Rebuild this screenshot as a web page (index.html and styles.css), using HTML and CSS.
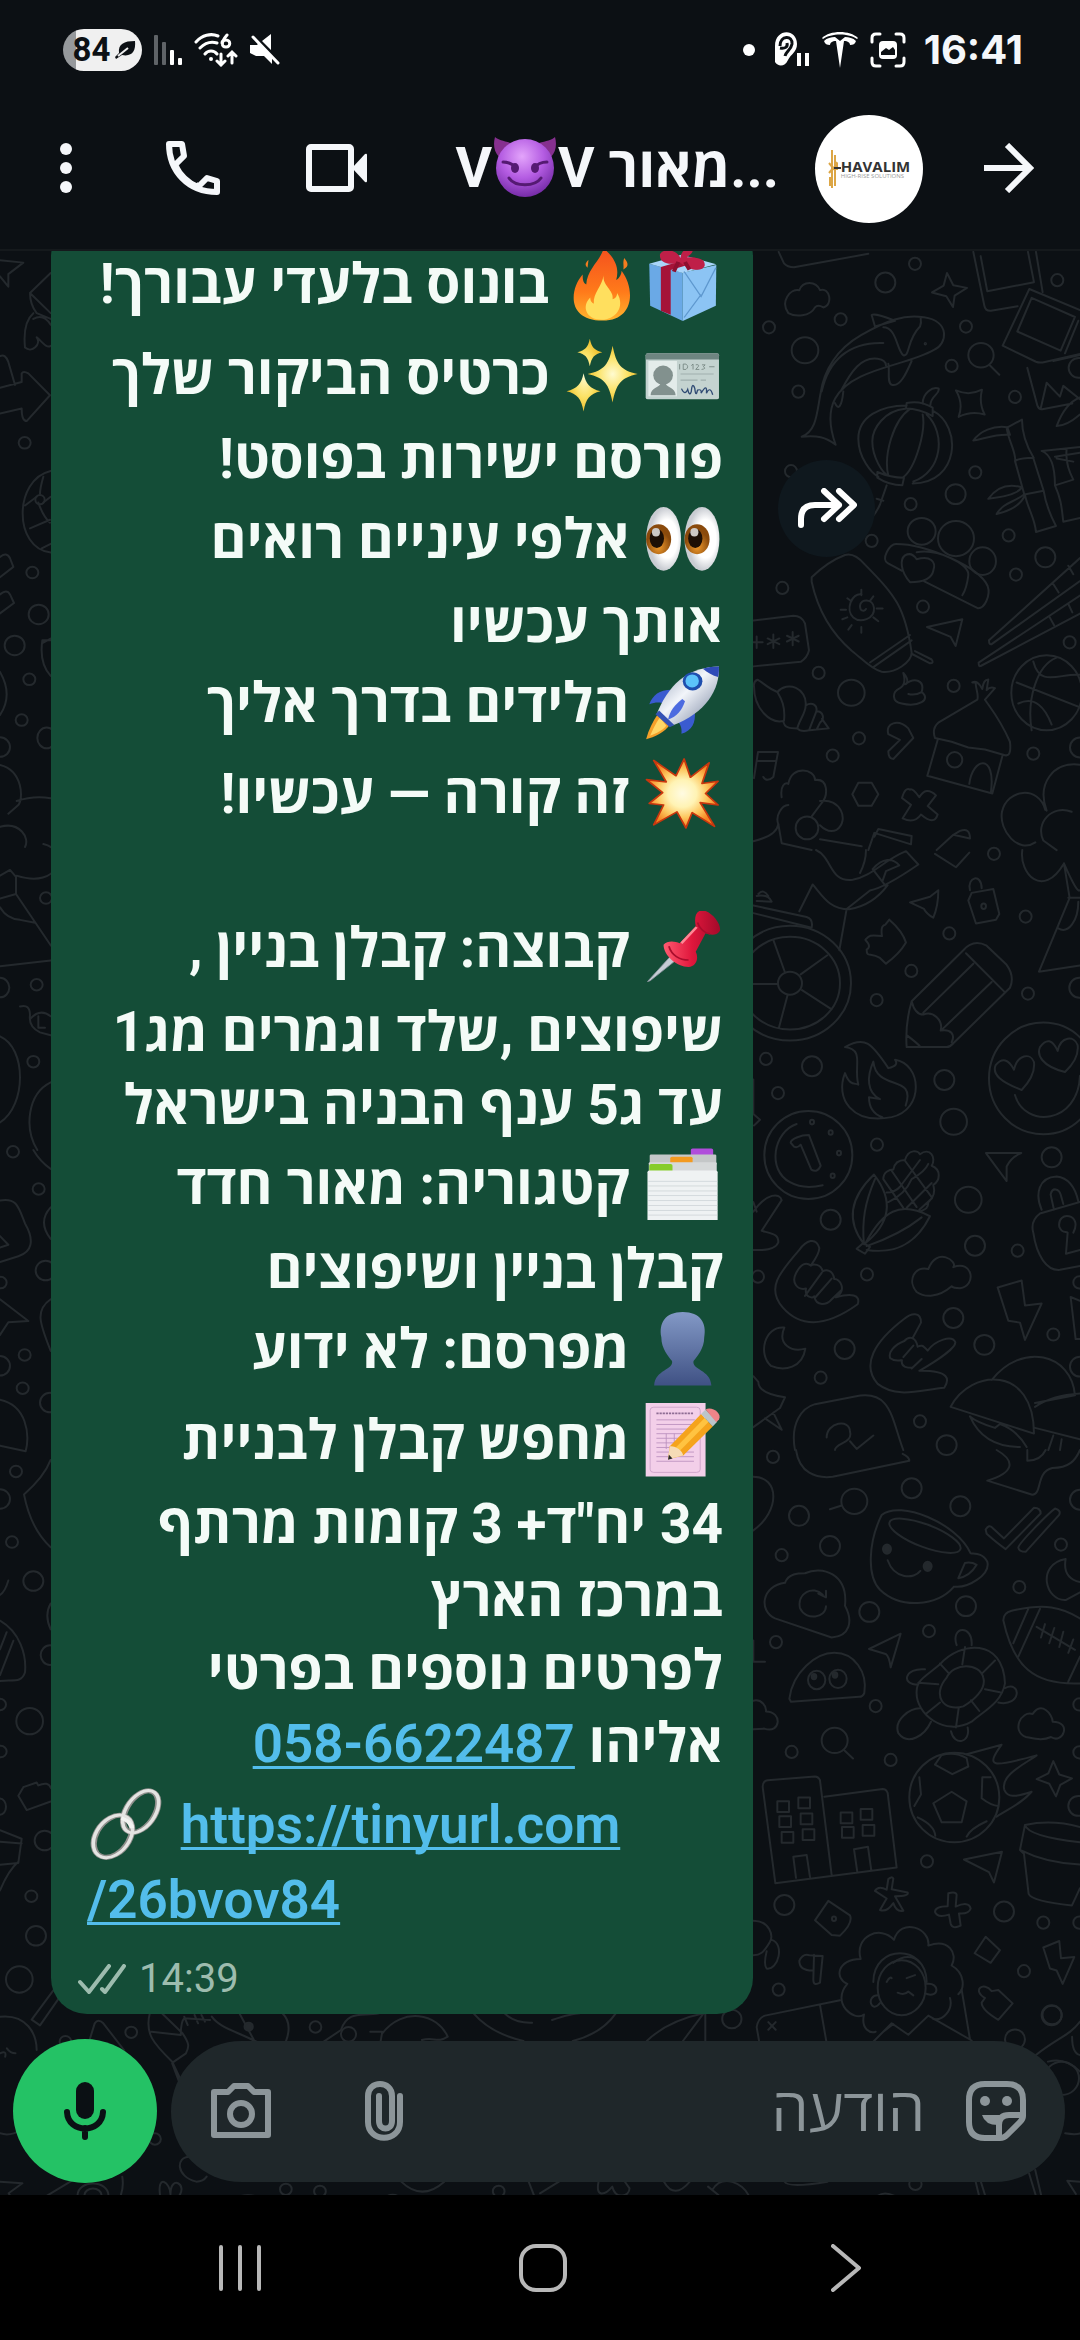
FILE: index.html
```html
<!DOCTYPE html>
<html lang="he">
<head>
<meta charset="utf-8">
<meta name="viewport" content="width=device-width, initial-scale=1">
<title>מאור</title>
<link rel="stylesheet" href="styles.css">
</head>
<body>
<div class="screen">

<div class="statusbar">
  <div class="statusbar__group">
    <span class="battery">84<svg width="21" height="20" viewBox="0 0 21 20"><path d="M20 1C9 1 3 4 4 13l-4 4 1 2 6-4c10 2 14-4 13-14z" fill="#0c1014"/><path d="M3 16 13 8" stroke="#f0f0f0" stroke-width="2"/></svg></span>
    <svg width="28" height="30" viewBox="0 0 28 30"><g fill="#5f6367"><rect width="4" height="30" rx="1"/><rect x="8" y="7" width="4" height="23" rx="1"/></g><g fill="#fff"><rect x="16" y="15" width="4" height="15" rx="1"/><rect x="24" y="23" width="4" height="7" rx="1"/></g></svg>
    <svg width="44" height="34" viewBox="0 0 44 34" fill="none" stroke="#fff" stroke-width="3" stroke-linecap="round"><path d="M2 9C8 2 17 0 24 3M6 15c5-5 11-7 17-5M11 21c3-4 9-4 12 0M27 21v11m-4-4 4 4 4-4M38 30V19m-4 4 4-4 4 4"/><circle cx="17" cy="26" r="2" fill="#fff" stroke="none"/><path d="M33 2c-6 7-6 12-1 12s5-7 0-7c-2 0-4 1-4 3"/></svg>
    <svg width="30" height="32" viewBox="0 0 30 32"><path d="M0 11h7l2-2 13 13v8l-8-8H6l-6-3zM12 7l9-7v16z" fill="#fff"/><path d="M3 3l25 26" stroke="#fff" stroke-width="3" stroke-linecap="round"/></svg>
  </div>
  <div class="statusbar__group">
    <svg class="statusbar__dot" width="12" height="12" viewBox="0 0 12 12"><circle cx="6" cy="6" r="6" fill="#fff"/></svg>
    <svg width="36" height="36" viewBox="0 0 36 36"><path d="M1 14C1-4 23-4 23 12c0 8-6 10-9 16-3 7-10 7-13 2z" fill="#fff"/><path d="M6 14c0-11 13-11 12-2-1 6-6 7-7 12m-5-8c5 1 8-1 7-5" fill="none" stroke="#0c1014" stroke-width="3"/><path d="M25 21v13M33 21v13" stroke="#fff" stroke-width="4"/></svg>
    <svg width="36" height="36" viewBox="0 0 36 36" fill="#fff"><path d="M0 6C8-2 28-2 36 6l-1 1C27 1 9 1 1 7zM2 9c3-3 7-4 11-4l5 4 5-4c4 0 8 1 11 4-1 3-3 4-6 4 0-2-2-4-6-4l-4 27-4-27c-4 0-6 2-6 4-3 0-5-1-6-4z"/></svg>
    <svg width="36" height="36" viewBox="0 0 36 36"><path d="M2 10V6q0-4 4-4h4m16 0h4q4 0 4 4v4M2 26v4q0 4 4 4h4m16 0h4q4 0 4-4v-4" fill="none" stroke="#fff" stroke-width="3" stroke-linecap="round"/><rect x="9" y="9" width="18" height="18" rx="4" fill="#fff"/><path d="M11 23v-3l5-4 3 2 4-3 2 3v5z" fill="#0c1014"/></svg>
    <time class="statusbar__time">16:41</time>
  </div>
</div>

<header class="appbar">
  <button class="icon-btn" aria-label="תפריט"><svg width="14" height="50" viewBox="0 0 14 50" fill="#f5f7fa"><circle cx="7" cy="6" r="6"/><circle cx="7" cy="25" r="6"/><circle cx="7" cy="44" r="6"/></svg></button>
  <button class="icon-btn icon-btn--call" aria-label="שיחה"><svg width="54" height="54" viewBox="0 0 54 54" fill="none" stroke="#f5f7fa" stroke-width="6" stroke-linejoin="round"><path d="M3 3h13l2 12-9 9C14 34 22 42 32 46l9-9 10 3v11C22 51 3 30 3 3zM9 24l2 3M32 45l-2-1"/></svg></button>
  <button class="icon-btn icon-btn--video" aria-label="שיחת וידאו"><svg width="61" height="48" viewBox="0 0 61 48"><rect x="3" y="3" width="42" height="42" rx="2" fill="none" stroke="#f5f7fa" stroke-width="6"/><path d="M46 24 59 10q2-1 2 1v26q0 2-2 1z" fill="#f5f7fa"/></svg></button>
  <h1 class="appbar__title" dir="rtl">...מאור <bdi dir="ltr">V<svg class="devil" width="66" height="60" viewBox="0 0 66 60" role="img" aria-label="שטן סגול"><defs><radialGradient id="dv" cx=".45" cy=".3" r=".75"><stop offset="0" stop-color="#e3a4fb"/><stop offset=".5" stop-color="#b45ce2"/><stop offset="1" stop-color="#6d259f"/></radialGradient></defs><path d="M3 0c3 3 9 4 16 6L7 20C2 15 1 7 3 0zM63 0c-3 3-9 4-16 6l12 14c5-5 6-13 4-20z" fill="#86308f"/><circle cx="33" cy="31" r="29" fill="url(#dv)"/><path d="M11 25c5 0 9 1 13 6M55 25c-5 0-9 1-13 6M17 41c6 9 26 9 32 0" fill="none" stroke="#551a72" stroke-width="3" stroke-linecap="round"/><ellipse cx="23" cy="31" rx="4" ry="5" fill="#551a72"/><ellipse cx="43" cy="31" rx="4" ry="5" fill="#551a72"/></svg>V</bdi></h1>
  <div class="avatar"><svg width="13" height="40" viewBox="0 0 13 40" fill="none" stroke="#dca646" stroke-width="2"><path d="M4 1v38M7 6v31M1 14l5 6 3-7M1 24l5-6M2 28v9M9 14v7"/><path d="M6 19h7" stroke="#333"/></svg><span class="avatar__text"><b>HAVALIM</b><small>HIGH-RISE SOLUTIONS</small></span></div>
  <button class="icon-btn" aria-label="חזרה"><svg width="50" height="50" viewBox="0 0 50 50" fill="none" stroke="#f5f7fa" stroke-width="6"><path d="M0 25h46M23 2l23 23-23 23"/></svg></button>
</header>

<main class="chat">
  <svg class="doodles" viewBox="0 0 1080 1944" preserveAspectRatio="xMaxYMax slice" aria-hidden="true">
    <defs><ellipse id="s" rx="18" ry="16"/><ellipse id="m" rx="30" ry="26"/><ellipse id="l" rx="40" ry="34"/></defs>
    <g transform="translate(740 -1) scale(.3333 .3827)">
      <use href="#s" x="525" y="36"/><use href="#s" x="302" y="181"/><use href="#s" x="87" y="202"/><use href="#s" x="678" y="200"/><use href="#s" x="635" y="303"/><use href="#s" x="175" y="370"/><use href="#s" x="825" y="384"/><use href="#s" x="952" y="79"/><use href="#s" x="153" y="578"/><use href="#s" x="706" y="581"/><use href="#s" x="512" y="664"/><use href="#s" x="395" y="760"/><use href="#s" x="806" y="746"/><use href="#s" x="828" y="848"/><use href="#s" x="127" y="883"/><use href="#s" x="549" y="932"/><use href="#s" x="989" y="1025"/><use href="#s" x="236" y="1105"/><use href="#s" x="641" y="1139"/><use href="#s" x="357" y="1276"/><use href="#s" x="278" y="1321"/><use href="#s" x="880" y="1316"/>
      <use href="#m" x="436" y="85"/><use href="#m" x="647" y="638"/><use href="#m" x="916" y="803"/><use href="#m" x="1016" y="308"/><use href="#m" x="1020" y="1300"/><use href="#l" x="195" y="262"/><use href="#l" x="334" y="1157"/>
      <path d="M116 5l16 30q10 10 30 10L385 10M145 165c-25-30 5-65 33-60 10-25 50-25 62 0 30-10 40 40 10 45-10-5-20-5-25 0-15 25-60 25-80 15zM621 60l19 32 41 7-37 20-5 30-20-28-43-10 35-18zM700 5l33 140q3 15 20 14l80-12M722 16l20 92 140-24-18-79M888 5l20 105M868 102l152 55M868 102l-80 148 100 42q8 3 20 2l112-22M875 125l130 50-43 88-130-50zM1015 185l-40 85"/>
      <path d="M185 488c45-15 45-60 57-115 10-60 50-115 120-150 80-40 130-55 190-47 80 10 70 70 30 85-60 30-150 40-220 70-60 25-120 70-75 178-30-20-55-25-102-21zM245 370c20-80 80-130 185-127M303 368c30-50 60-90 110-84 15 2 25 8 25 18M285 400c10 20 20 10 25-30M395 170c10-5 40 5 70 15l-60 15zM430 202c40 0 40 60 60 73 20 5 10-40 50-75q5-10 2-22M515 290c-15 30-35 70-60 62-15-5-5-40-10-55"/>
      <circle cx="556" cy="245" r="2"/><ellipse cx="723" cy="275" rx="38" ry="32"/><path d="M750 302l28 24M648 367q40 15 78-2-10 35 8 65-40-10-78 6 15-35-8-69zM862 308l30 98q5 12 15 10l90-15M902 415l18-68 40 36 10-28 50 35M1020 385c-30 10-55 40-70 75q30 0 70-30M940 290l80-16"/>
      <path d="M548 402c0-30 30-45 48-40 5 15-25 18-25 45M500 400q40-8 78 12l0 22q-40-20-80-20zM500 406c-80 0-145 30-145 87 0 50 40 90 60 100M495 415c-60 5-98 50-98 85 0 40 30 85 50 90M510 415c-50 30-80 120-65 175M548 430c10 40-20 140-60 165M560 430c60 50 45 150-40 175M578 420c90 40 80 190-60 190M412 580q40 15 80 15l-5 20q-40 0-75-20zM440 615l-20 50c-20 40-70 80-120 75M410 650l20 5"/>
      <path d="M700 498c20-25 60-40 102-35l8 20c-40-3-70 8-110 15zM800 465l46-22q0 50 35 100-40 0-55 8c0-30-20-50-26-86zM825 551l28 88 58-10-32-88M855 640c10 40 30 60 33 97l60-16q-30-50-37-92M745 650c25-30 60-40 100-30q-10 20-100 30zM850 640c-30 20-60 20-80 50q70-15 85-50M905 525l115-10M905 525c30 10 40 50 40 90l55-15q-25-40-20-80M945 615c20 40 20 60 25 95l50-10M945 540l75-10M950 545l50 8"/>
      <ellipse cx="545" cy="735" rx="42" ry="35"/><ellipse cx="648" cy="754" rx="54" ry="46"/><ellipse cx="728" cy="813" rx="40" ry="36"/>
      <path d="M485 838l-42-20c-20-10 5-50 25-50 90 0 250 60 275 110 10 25-10 60-30 58l-160-70M510 868c-30-30-30-60-15-70q20-10 35 10c40-10 60 5 50 30-5 20-30 30-70 30zM530 790c60-10 160 30 155 60q-5 35-18 52"/>
      <path d="M215 855c30-25 60-45 100-58 20-5 40 5 60 25 90 80 120 110 140 230 0 25-50 55-90 50-30-5-60-35-90-55-60-45-100-100-120-180zM390 1078l120-72M400 1090l115-70M525 1048l50 22q8 10-5 10l-55-25"/>
      <path d="M365 900c-30-5-50 40-25 60 20 15 65 5 62-25-3-25-40-25-42-5 0 15 15 15 18 8M364 888v14M400 905l-10 12M410 937h18M400 960l15 10M364 985v15M335 980l-10 12M322 960l-15 5M302 940h16M322 910l12 8"/>
      <path d="M561 985l106-20-20 70-15-24zM747 1020l273-215M755 1030L1020 865M747 1020q0 12 8 10M716 1078l304-175M722 1087L1020 950M716 1078q0 12 6 9M938 870l18 25M985 825l15 22M985 925l12 22M928 958l14 22M40 968l120-12q25 0 35 20l12 70q-5 20-25 30L40 1088M100 1005v35M83 1015l35 15M118 1015l-35 15M158 998v35M141 1008l35 15M176 1008l-35 15M50 1010v30M40 1025h28"/>
      <path d="M42 1140c0 60 50 100 90 90 5-40-10-60-20-75-30-10-50-30-60-32q-12 5-10 17zM112 1155c30-30 90-10 85 35 0 20-20 40-25 60-20 0-40 0-42-20M197 1190c20-10 40 0 30 20l-20 45q-25 5-35-5M230 1205c20 0 25 20 10 30l-10 18-20 2M246 1225l20 25-35 3M490 1105c20 20 10 30 5 30 30-20 60-10 50 20 30 20-10 40-60 30-30-5-30-30-5-40q20-10 10-40zM505 1160q20 5 40-5M445 1265c-10-30 30-40 60-15l15 25-60 55q-15 0-15-20l35-30zM707 1130c0 20 10 30 5 45L595 1235q-20 15-10 40l50 10 50 15 50 5 60 15q20 5 15-35c-30-60-60-90-75-110l30-30q-15-5-25 5l5-28q-15 0-18 25-15-25-30-17zM594 1277l-32 97 195 46 30-97M688 1395c10-70 80-80 65 20"/>
      <ellipse cx="644" cy="1332" rx="23" ry="20"/><ellipse cx="920" cy="1157" rx="106" ry="98"/><path d="M830 1130l190 65M880 1075c20 70 80 30 140 35M950 1065c-60 20-90 110-75 190M835 1185c50-20 80 10 100 55M42 1380l12-68h60l-14 65q-20 15-30 0M50 1335h58M115 1500c-10-20 10-50 30-50M125 1430c-5-30 10-40 20-35 10-50 80-40 80-10 40-5 40 40 20 60l-30 35M240 1440c60-10 90 50 50 75q-25 10-50-12"/>
      <ellipse cx="201" cy="1510" rx="34" ry="30"/><path d="M355 1392h40l20 30-20 30h-40l-18-30zM510 1410q8-5 28 20 20-30 50-5l-25 28 30 22q-10 30-50 0-20 25-55 10l25-35-27-18q10-30 24-22zM40 1545q70-15 75-45l10 50 90 18M240 1540l125 18M385 1568l18-45 110 30 2-22-100-18-12 20M590 1568l50-40 50 10q0-30-30-20l-20 10M886 1548c-50 30-110-30-100-80 15-60 110-70 130-5M920 1465c-30-70 20-130 100-120M995 1468c-60-20-110 30-85 75l40 25"/>
    </g>
    <g transform="translate(740 599) scale(.3333 .3827)">
      <use href="#s" x="762" y="10"/><use href="#s" x="857" y="174"/><use href="#s" x="628" y="218"/><use href="#s" x="514" y="316"/><use href="#s" x="410" y="392"/><use href="#s" x="864" y="375"/><use href="#s" x="78" y="546"/><use href="#s" x="114" y="635"/><use href="#s" x="411" y="770"/><use href="#s" x="833" y="1047"/><use href="#s" x="381" y="1109"/><use href="#s" x="54" y="1115"/><use href="#s" x="940" y="1266"/><use href="#s" x="242" y="1379"/><use href="#s" x="540" y="1493"/><use href="#s" x="1018" y="1130"/>
      <use href="#m" x="216" y="565"/><use href="#m" x="613" y="601"/><use href="#m" x="935" y="803"/><use href="#m" x="272" y="966"/><use href="#m" x="705" y="1034"/><use href="#m" x="640" y="1223"/><use href="#m" x="314" y="1304"/><use href="#m" x="733" y="1293"/><use href="#m" x="1018" y="360"/><use href="#m" x="1020" y="1350"/><use href="#m" x="620" y="1555"/><use href="#l" x="641" y="710"/><use href="#l" x="685" y="914"/>
      <path d="M228 0c50 20 40 85 110 78 60-10 90-50 160-75l37 35q-100 60-145 68l-70 48-22 108M178 160l40-70c30 30 50 65 110 65q70-10 115-63M378 0q0 30-18 60M398 50l40 45M398 50c30-30 60-30 80-10l-40 15-10 25M585 10l63 35 40-38M847 0c-10 60 60 130 125 35M972 35q40 80 48 70M972 35l17 90-92 193 123-16M985 125h35M955 205c30 15 60-20 60-70"/>
      <path d="M40 145l160 30q20 5 15 28L40 165M50 120q35-5 45 15l-45-2M55 115q15-15 30 5"/><ellipse cx="150" cy="348" rx="183" ry="150"/><ellipse cx="150" cy="348" rx="150" ry="121"/><ellipse cx="150" cy="348" rx="36" ry="30"/><path d="M0 350h114M182 325l80-50M186 366l88 50M143 378l-26 86M135 320l-35-85"/>
      <path d="M510 137l60-15 25-17q0 40-15 72-20-10-28-23zM690 105c-10-35 35-45 35-5M695 112l65-10 18 65-10 15-60 10-23-60z"/><circle cx="731" cy="147" r="7"/><path d="M376 235c10-10 10-15 50-10-5-25 5-30 10-30l12-13q40 30 50 60-20 30-60 55l-18-15c-30-15-40 0-40-22 10-5 10-12-4-25z"/>
      <path d="M515 395L670 262q30-30 70-12l60 50q25 30 10 60L640 505q-10 10-20 10H500q-5-60 15-120zM678 270l117 102M700 297L550 425M755 345L605 470M515 395q10 35 35 35c30-10 60 15 52 42 30-5 45 10 33 30M502 485q30 20 38 28"/>
      <path d="M315 515c60-30 80-10 130 55 20-5 30-10 20-22 80 10 90 130-10 150-120 20-170-50-140-115 15 35 30 25 40 30-15-50 20-90-40-98zM400 553c10 80 130 30 97 115M400 553c-20 40-20 80 20 98l-33-5q0 40 40 52"/>
      <ellipse cx="910" cy="597" rx="163" ry="146"/><path d="M845 627c-60-20-90-40-78-65q30-30 55 12c10-40 50-45 60-20q5 35-37 73zM975 580c-70-15-85-45-75-65q30-35 53 10c10-40 50-40 60-15q5 35-38 70zM825 640c30 90 190 75 195-50"/>
      <ellipse cx="205" cy="797" rx="132" ry="115"/><path d="M170 716c-70 20-90 120-20 152q40 20 98 8M152 765c0-10 30-20 55-20l35 80q-10 20-28 10l-32-65q-10 10-20 5z"/><circle cx="216" cy="711" r="6"/><circle cx="272" cy="738" r="6"/><circle cx="297" cy="792" r="6"/><circle cx="278" cy="851" r="6"/>
      <path d="M402 848q90 100-30 182-80-90 30-182zM405 860c-30 60-40 110-33 170M378 1025c50-80 100-110 192-68-40 70-100 100-190 88M380 1035q100-30 165-75M350 1042l20-15 20 10-15 18zM430 860c0-20 20-25 30-25 5-25 30-25 35-25 10-30 40-25 45-15 30-20 50 10 35 30 30 10 25 40 5 50 10 30-10 40-15 45 0 20-15 20-25 25M430 860l60 75M455 838l75 95M495 812l80 95M440 895q25 0 40-15l60-70M445 920q50-20 70-60 40-20 50-40M500 935l75-65M538 940l38-30"/>
      <path d="M738 792h106q-30 10-44 35v38zM905 940c-20-40-10-85 45-87q50 5 65 65M932 900c5-20 25-15 30 0l8 25M932 900l10 40M1020 920l-120 30q-30 20-20 50c10 60 40 100 80 97l60-10M1000 1000c30-50-50-60-42-15 10 20 20 10 25 15l-5 55 42-10"/>
      <path d="M40 945c40-50 80-50 85-30l-60 80c40 10 50 10 50 30-10 25-60 20-75 20M40 920l10 25M238 1040c-10-30-40-20-60 5-60 60-100 100-50 150 60 60 140 45 225-8 10-25-20-30-65-18 35-20 10-50-5-48-5-25-25-25-35-20-5-20-30-20-35-15-15-10-30-5-45 20s5 45 30 40c-5 25 20 25 25 20 5 30 40 20 50 10l30-25M238 1040q0 15-25 45M245 1105l-50 60M275 1120l-50 50"/>
      <path d="M530 1155c-30-30-5-70 35-60 25-60 90-20 75-5 60-20 70 50 20 55q-20 0-25-5c-40 30-80 30-105 15zM773 1143l72-18 10 65 50-5-50 95-15-45-35-5zM992 1168l28 10M992 1168l15 110h13M543 1235c0-30-30-25-50-10-90 60-130 120-80 170 60 40 130 15 200 10 15-20 20-45-75-44 50-25 110-60 108-75-10-20-60-5-83 22-15-15-20-15-30-10-5-25-25-30-40-15-30 10-50 30-42 45 15 10 30 5 35 5-5 20 20 20 30 20M543 1235l-25 40M490 1325l30-30M515 1355l30-25"/>
      <path d="M133 1248c-60-5-80 70-40 100 40 15 95 5 103-45-40 10-85-10-63-55zM40 1375l15 15q0 30 80 40l-15 28-80 50M100 1470l25 45-50-30M632 1455c60-100 250-110 250 70zM755 1385c90-100 240-70 250 40l-120 20M885 1455q50-30 135-35M885 1510l135 30M690 1480q40 80 150 80M690 1480q20 15 75 30l15-10q50 15 80 60M260 1535c0-40 70-50 70-15 10 30-45 30-45 48M330 1545l20 20 50-35"/>
      <path d="M165 1568c-15-70 20-110 60-120l120-20c110-20 110 60 145 140M40 600v90l20 15-18 15M940 1530l-15 38M965 1540l-5 28"/>
    </g>
    <g transform="translate(740 1199) scale(.3333 .3827)">
      <use href="#s" x="99" y="18"/><use href="#s" x="125" y="275"/><use href="#s" x="963" y="247"/><use href="#s" x="838" y="358"/><use href="#s" x="567" y="473"/><use href="#s" x="108" y="502"/><use href="#s" x="407" y="669"/><use href="#s" x="155" y="789"/><use href="#s" x="452" y="810"/><use href="#s" x="561" y="1075"/><use href="#s" x="910" y="1235"/><use href="#s" x="852" y="1362"/><use href="#s" x="116" y="1410"/><use href="#s" x="1018" y="665"/><use href="#s" x="1018" y="790"/><use href="#s" x="1018" y="1235"/>
      <use href="#m" x="515" y="100"/><use href="#m" x="661" y="147"/><use href="#m" x="177" y="172"/><use href="#m" x="270" y="251"/><use href="#m" x="678" y="408"/><use href="#m" x="388" y="423"/><use href="#m" x="133" y="1189"/><use href="#m" x="792" y="1206"/><use href="#m" x="935" y="1477"/><use href="#m" x="1015" y="930"/><use href="#m" x="825" y="1540"/><use href="#m" x="1020" y="130"/>
      <ellipse cx="343" cy="134" rx="39" ry="33"/><ellipse cx="284" cy="759" rx="39" ry="33"/><path d="M305 145l-35 10M312 784l27 22M168 0c10 60 60 75 110 70l230-42q0-10-20-18M770 0c60 30 50 60-28 80l135 37c30 0 10-60 60-70 50 0 70-20 83-47M862 0v28q40 0 55-28M40 70c80 0 80 90 0 140M737 208q10-15 20-5l35 28 90-80q20 0 20 15l-105 93q-25-15-57-40zM835 255c0-10 90-90 110-102q20 5 12 17l-100 96q-20 0-22-11z"/>
      <path d="M425 170c-40 70-45 160-5 195 60 50 170 45 222-8 40 5 110-30 100-65-15-25-40-20-50-22C650 190 480 130 425 170zM655 335l20-40q20-3 35 5-20 30-55 35zM443 288c20 50 80 50 98 28"/><ellipse cx="555" cy="224" rx="112" ry="30" transform="rotate(18 555 224)"/><circle class="fill" cx="441" cy="259" r="12"/><circle class="fill" cx="563" cy="304" r="12"/>
      <path d="M135 347c10-25 40-25 60-25 50-20 130 0 120 85 25 40 15 80-40 83l-170-50c-50-20-40-85 30-93zM258 408c0 30-60 40-78 5-10-40 40-60 68-35M235 375l23 10V368M387 520l95-40-30 88q-5-30-15-35zM977 285c-90 15-60 110 0 107l43-20M977 285q-10 50 43 60M40 498v55h35"/>
      <path d="M148 650c10-70 80-120 135-120 60 0 100 50 90 105q-5 10-15 10l-205 13z"/><ellipse cx="230" cy="601" rx="26" ry="24"/><ellipse cx="294" cy="598" rx="26" ry="24"/><circle class="fill" cx="222" cy="592" r="7"/><circle class="fill" cx="285" cy="588" r="7"/>
      <path d="M790 445q0-20 25-25c100-20 150-10 205 20M790 445c30 120 90 170 230 165M865 415l-45 90M900 415l-65 125M985 605l35-65M890 462l115 60M915 455l-12 35M943 465l-15 40M970 475l-12 40M1000 495l-15 35"/>
      <path d="M600 560c60-60 190-70 195 50-10 50-60 70-100 100-80 40-170-20-165-80 0-30 30-40 70-70zM620 595c20-40 100-40 110 0 10 30-30 60-60 75-60 15-95-30-50-75zM600 558l28 27M675 515l-8 45M765 550l-40 35M780 633l-45-8M718 682l-25-28M648 725l8-50M560 688l40-28M535 608l60 4M650 510c-20-50 50-55 45 0M555 573c-60-5-75 40-20 40M795 622c50-20 50 50-20 38M540 675c-30 0-80 30-65 65 30 35 80 5 98-30M633 735c10 40 60 30 50-10M40 655c25-5 40 15 38 28 50 0 45 60-5 45l-33 2M858 750c-45-15-15-70 20-60 25-35 60 0 60 20 60 0 30 60-5 40-25 10-45 5-75 0z"/>
      <ellipse cx="643" cy="908" rx="135" ry="117"/><path d="M635 893l45 25-15 55h-60l-25-50zM585 822l20-25q40-10 75 8l5 22-48 20zM523 930l20-30-5-45M533 960q50 20 53 48M680 1010q10-20 60-40M752 855h-25l-2 55q30 20 50 20M680 795l105-25c-50 60-30 60 105 28-30 20-110 50-97 90 10 20 30 20 82 5-30 30-60 40-105 65M940 813l18 35 38 10-35 17-13 30-20-33-38-12 35-15z"/>
      <path d="M106 1132L68 880q0-15 15-17l142-10q10 0 15 10l35 248M253 906l175-20q10 0 15 10l27 195-364 41M168 1118l-8-55 40-5 10 58M352 1103l-10-60 42-6 10 62M112 918h35v28h-35zM175 908h35v28h-35zM118 957h35v28h-35zM182 950h35v28h-35zM125 998h35v28h-35zM188 991h35v28h-35zM302 947h35v28h-35zM362 938h35v28h-35zM306 985h35v28h-35zM368 980h35v28h-35z"/>
      <path d="M672 1070l114-20-24 80-15-27zM855 980l-15 65 12 10 14 105q10 20 130 30l24-45M855 980q80-15 165 5M855 980q10 30 165 45M840 1045q80 35 180 38M460 1120l-5 28 48 8q5 10-38 10l25 38q-20 5-30-20-20 25-40 18l20-30-35-20q10-15 35-3l5-28q10-8 15-1zM625 1158q25-5 25 5l-3 30q40-15 45 5-5 15-35 13l5 32q-25 10-30-5l-5-24q-35 10-42-7 0-15 38-15zM265 1178l65 38q10 20-30 53l-25-2-50-38z"/><circle cx="282" cy="1225" r="6"/>
      <path d="M178 1335q10-20 30-15l40 2-8 70q-20 10-20-8l2-65M178 1335q0 25 40 25M40 1230c50 0 60 40 50 55-20 30-30 35-50 35M95 1280c40 10 20 80-15 75q-10-10 0-45M737 1272l43 35-28 33-48-25zM910 1300l48-17 5 45 40-3-35 70-18-35-20-5zM735 1432c-40-20-5-45 20-18l20-3 43 35-43 43q-50-25-50-45z"/>
      <path d="M362 1330c-20-60 60-90 100-50 20-60 110-30 103 15 60-20 90 20 70 52 40 20 40 60 20 75M362 1330c-70 0-80 50-40 65-50 50 20 100 50 80-10 40 20 50 35 45M630 1432c10 30-20 60-50 55"/><ellipse cx="485" cy="1405" rx="72" ry="72"/><path d="M400 1390c0-100 160-100 160 0M460 1340c30-20 60-20 80 0M440 1390q10-15 15-10M500 1380l25-8M473 1418q20 8 32-3l15 10M415 1425c-40 0-20 50 5 20M560 1395c40-5 40 40-5 25M375 1568l80-70 50 30 60-50 130 65M665 1410l25 130M62 1568l-12-60q5-25 25-30l225-40M240 1450l22 110M85 1495l22 20M107 1495l-22 20M460 1500l-30 20"/>
    </g>
    <g transform="translate(0 -1) scale(.3333 .574)">
      <path d="M0 18l70 4-45 20 0 22-25-18M152 40L90 75q0 20 20 35l42 10M90 75l62 35M100 110c-20 10-30 30-25 60 20 10 50-5 35-18 20 10 30 20 42 15M100 120q30-10 52 10M0 240l65-10V215q5-5 20 0l65 38-70 45q-15 0-15-22L0 285M0 185q15-5 25 10l20 40M0 535q20-10 30 2l10 15-40 18M0 600q20-10 30 0l12 15-42 18M152 385C40 400 40 520 152 527M110 430l-35 15M130 440l22-10M130 395q-10 20-10 30M90 485l60-15M115 440q15 25 35 35M125 520l27-8M0 735q40 40 0 75M152 680h-25q-10 40 25 62M127 685l25-8M0 897c70 10 70 60 55 70l-30 15M0 982M50 960q50-10 102-5M0 1005c60-10 90 20 75 35M130 1035c80 10 50 80-80 55M0 1090l30-10 18 12v30l-48 8M48 1122l105 90M0 1145q20 20 60 22l45 5M0 1248l152-10M60 1318q30-5 30 15-5 20 30 30l32 5M90 1340q30-20 62-5M115 1335v20h20M0 1370c80 20 80 120 0 150M152 1450c-70 20-80 80-40 118"/>
      <ellipse cx="74" cy="336" rx="18" ry="10"/><ellipse cx="97" cy="562" rx="18" ry="10"/><ellipse cx="116" cy="635" rx="30" ry="17"/><ellipse cx="44" cy="689" rx="30" ry="17"/><ellipse cx="88" cy="748" rx="18" ry="10"/><ellipse cx="65" cy="819" rx="18" ry="10"/><ellipse cx="0" cy="866" rx="30" ry="17"/><ellipse cx="140" cy="850" rx="28" ry="18"/><ellipse cx="138" cy="1129" rx="18" ry="10"/><ellipse cx="110" cy="1280" rx="18" ry="10"/><ellipse cx="0" cy="1285" rx="28" ry="17"/><ellipse cx="100" cy="1414" rx="18" ry="10"/><ellipse cx="120" cy="435" rx="14" ry="8"/>
    </g>
    <g transform="translate(0 899) scale(.3333 .574)">
      <path d="M0 88c50-5 55 10 75 40 30 30 20 50-20 57L0 195M0 150l25 15-25 5M0 260l85 38-60 2-25 22M0 435c80 10 90 60 77 90L0 515M152 540q-20 30-80 60 20 60 80 92M100 0q20 20 52 33M152 100q-40 25 0 55M152 260c-50 20-30 45 0 90M0 820c60 20 80 60 75 90-10 20-40 12-75 15M40 855l-40 60M20 840l-20 30M0 1185l65 15-10 42-55 3M0 1205l65 3M55 1240q-30 15-55 50M70 1110l40-8 5 5q30-8 38 5M70 1110l-15 15 25 25 72-15M0 1510c80-5 110 30 110 58M95 1515l70-55 15 15-60 50zM152 790q-20 20 0 45M25 750q-10 20-25 25"/>
      <ellipse cx="39" cy="3" rx="18" ry="10"/><ellipse cx="116" cy="68" rx="18" ry="10"/><ellipse cx="137" cy="210" rx="30" ry="17"/><ellipse cx="2" cy="231" rx="18" ry="10"/><ellipse cx="74" cy="357" rx="18" ry="10"/><ellipse cx="0" cy="376" rx="30" ry="17"/><ellipse cx="68" cy="415" rx="18" ry="10"/><ellipse cx="150" cy="440" rx="30" ry="17"/><ellipse cx="48" cy="560" rx="18" ry="10"/><ellipse cx="0" cy="608" rx="30" ry="17"/><ellipse cx="36" cy="683" rx="18" ry="10"/><ellipse cx="100" cy="751" rx="30" ry="17"/><ellipse cx="150" cy="880" rx="28" ry="17"/><ellipse cx="0" cy="966" rx="18" ry="10"/><ellipse cx="89" cy="995" rx="40" ry="23"/><ellipse cx="2" cy="1048" rx="18" ry="10"/><ellipse cx="134" cy="1203" rx="30" ry="17"/><ellipse cx="94" cy="1300" rx="18" ry="10"/><ellipse cx="108" cy="1369" rx="30" ry="17"/><ellipse cx="58" cy="1445" rx="40" ry="23"/><ellipse cx="0" cy="1144" rx="18" ry="14"/>
    </g>
    <g transform="translate(0 1749) scale(.3444 .3333)">
      <path d="M260 120l15-50q10-15 25 0l60 80M435 40c-15 60 10 90 65 145l25 55M440 95l85 10M470 40l60 60c20 30 20 40 10 60l-35 25M525 105q0-40 10-50l75 5M545 75l-10-25M575 70l-10-25M595 65l-10-20M615 50c20 30 60 40 130 75M695 40l45 85M820 40q30 30 10 85M940 125l50-35c20-60 60-40 110-50M1075 95h35l-5 30M1110 100c60-80 160-60 190 10-30 20-40 0-75 10M1375 40q50 60 145 83M1465 40q30 30 80 28M0 160q20-10 15 10M20 145q10 15 25 15M0 400q30 10 60-10M0 545l65 5-40 30 5 8M135 588l80-50M355 530q5 30-5 58M225 588c0-50 90-50 90 0M245 588c0-30 50-30 50 0M465 588c-10-70 30-40 30-5 0-60 50-30 25 5M550 470c-40 0-40 60 20 75q20 0 30-15M1165 545q60 60 125 0M1535 545l15 40M700 588q20-5 40 0M1125 588q15-8 30 0M500 190l20 55"/>
      <circle cx="381" cy="97" r="17"/><circle cx="916" cy="81" r="17"/><circle class="fill" cx="722" cy="80" r="12"/><circle cx="1012" cy="103" r="22"/><circle cx="830" cy="568" r="17"/><circle cx="929" cy="574" r="17"/><circle cx="1448" cy="574" r="17"/><circle cx="450" cy="417" r="17"/><circle cx="190" cy="125" r="17"/>
    </g>
    <g transform="translate(540 1749) scale(.3444 .3333)">
      <path d="M35 60q60-20 80-20M220 40q-40 60-125 83M310 123q60-60 165-83l-60 83M480 40v83M1440 165c60-50 100-60 128-100M1545 110q0 50 23 55M1475 185q50-15 93 30M1525 400q30 5 43 0M0 580l55-35M170 545c-10 50 20 40 40 15 10 40 50 30 50 5l-15-22M360 545q30 55 75 0M488 560l30 25M500 570c30-50 90-20 105 15M710 545q10 20 125 0M980 588q20-15 50 0M1265 545l10 43M1280 545l13 43M1420 520l20 68M1438 510l17 75M1568 545l-37-3 25 40"/><circle cx="557" cy="57" r="28"/><circle cx="1090" cy="552" r="18"/><circle cx="1487" cy="45" r="28"/><circle cx="1515" cy="235" r="50"/>
    </g>
  </svg>

  <article class="message">
    <div class="bubble">
      <p class="text" dir="rtl">
        <span class="line line--emoji"><svg class="emoji" viewBox="1326 21 179 193" preserveAspectRatio="none" role="img" aria-label="מתנה"><path d="M1340 65l75 23v126l-73-40z" fill="#6aa9e6"/><path d="M1415 88l75-20-1 106-74 40z" fill="#8cc4f4"/><path d="M1340 65l72-24 78 25-75 23z" fill="#a9d5fa"/><path d="M1366 73l22 7v118l-22-11zM1440 48l20 8-72 25-22-8z" fill="#a51338"/><path d="M1418 85l38 65 33-75M1418 205l38-60" stroke="#5e98cf" stroke-width="3" fill="none"/><path d="M1410 50c-10-25-40-25-46-10-2 20 15 30 46 22 20 22 50 24 54 8 2-16-10-22-40-22 24-20 10-26-2-20-8 2-12 14-12 22z" fill="#bf1f48"/><path d="M1405 60l-10 25M1420 60l10 20" stroke="#8e0f30" stroke-width="9"/></svg><svg class="emoji" viewBox="1147 21 179 193" preserveAspectRatio="none" role="img" aria-label="אש"><defs><linearGradient id="fi" x2="0" y2="1"><stop offset="0" stop-color="#f4511e"/><stop offset=".6" stop-color="#ff7a1a"/><stop offset="1" stop-color="#ffb52e"/></linearGradient></defs><path d="M1238 25c28 26 35 55 28 82 8-5 12-16 12-24 30 45 30 130-42 130-80 0-75-80-45-120 0 16 2 22 8 26 2-40 30-60 39-94z" fill="url(#fi)"/><path d="M1238 95c-4 26 24 40 20 62 8-2 10-10 10-16 20 38-6 70-34 70-36 0-46-36-26-58 0 10 4 14 8 16-2-28 18-44 22-74z" fill="#ffdf5e"/><path d="M1284 50c12 16 8 24-2 30 2-8-2-18 2-30zM1204 55c-8 8-8 14-2 20z" fill="#f57c1f"/></svg> בונוס בלעדי עבורך!</span>
        <span class="line line--emoji"><svg class="emoji" viewBox="1326 258 179 193" preserveAspectRatio="none" role="img" aria-label="תעודה מזהה"><rect x="1332" y="298" width="164" height="120" rx="5" fill="#c4d3d0"/><path d="M1332 314v-11q0-5 5-5h154q5 0 5 5v11z" fill="#6e8581"/><rect x="1338" y="318" width="64" height="92" fill="#e3ecea"/><ellipse cx="1371" cy="355" rx="22" ry="25" fill="#82918e"/><path d="M1343 407c0-20 20-20 22-30h12c2 10 22 10 22 30z" fill="#82918e"/><path d="M1408 326v14m8-14h6q8 7 0 14h-6zM1434 330l4-4v14M1444 328q8-2 6 4l-6 8h8M1458 328h7l-4 5q8 5-4 7M1474 333h12" fill="none" stroke="#71827e" stroke-width="2"/><path d="M1410 352h74M1410 368h38M1455 368h12" stroke="#9fb0ad" stroke-width="3"/><path d="M1412 390q8 20 14 2 4 20 8 6 2-28 8-8 2 24 6 4 10-4 8 8 14-28 12 0 8-20 14 4" fill="none" stroke="#2f4a73" stroke-width="3"/></svg><svg class="emoji" viewBox="1147 258 179 193" preserveAspectRatio="none" role="img" aria-label="ניצוצות"><defs><radialGradient id="sp"><stop offset="0" stop-color="#fffbd0"/><stop offset=".6" stop-color="#fbe266"/><stop offset="1" stop-color="#eec02e"/></radialGradient></defs><g fill="url(#sp)"><path d="M1258 278c8 48 18 64 56 74-38 10-48 26-56 74-8-48-18-64-56-74 38-10 48-26 56-74z"/><path d="M1207 260c4 22 10 30 28 35-18 5-24 13-28 37-4-24-10-32-28-37 18-5 24-13 28-35zM1193 350c5 28 14 40 38 47-24 7-33 19-38 53-5-34-14-46-38-53 24-7 33-19 38-47z"/></g></svg> כרטיס הביקור שלך</span>
        <span class="line">פורסם ישירות בפוסט!</span>
        <span class="line line--emoji"><svg class="emoji" viewBox="1326 686 179 193" preserveAspectRatio="none" role="img" aria-label="עיניים"><defs><radialGradient id="ey" cx=".6"><stop offset=".6" stop-color="#fff"/><stop offset="1" stop-color="#c9ccd2"/></radialGradient><radialGradient id="ir" cy=".75"><stop offset="0" stop-color="#f09a2c"/><stop offset="1" stop-color="#8a4a0c"/></radialGradient></defs><ellipse cx="1372" cy="782" rx="39" ry="83" fill="url(#ey)"/><ellipse cx="1458" cy="782" rx="39" ry="83" fill="url(#ey)"/><ellipse cx="1361" cy="783" rx="28" ry="39" fill="url(#ir)"/><ellipse cx="1447" cy="783" rx="28" ry="39" fill="url(#ir)"/><ellipse cx="1357" cy="781" rx="16" ry="25" fill="#1d0f05"/><ellipse cx="1443" cy="781" rx="16" ry="25" fill="#1d0f05"/><ellipse cx="1355" cy="765" rx="9" ry="11" fill="#cdc9c5"/><ellipse cx="1441" cy="765" rx="9" ry="11" fill="#cdc9c5"/></svg> אלפי עיניים רואים</span>
        <span class="line">אותך עכשיו</span>
        <span class="line line--emoji"><svg class="emoji" viewBox="1326 1116 179 193" preserveAspectRatio="none" role="img" aria-label="רקטה"><defs><linearGradient id="rk" x1="0" y1="0" x2="1" y2="1"><stop offset="0" stop-color="#8e9cb4"/><stop offset=".45" stop-color="#f2f5fa"/><stop offset="1" stop-color="#6d7b98"/></linearGradient></defs><path d="M1390 1178c-28 0-42 14-50 38 14-6 26-6 36 0zM1442 1235c2 30-6 48-30 58 2-18-4-28-12-38z" fill="#3a5bd0"/><path d="M1360 1240c-12 20-22 44-27 67 18-6 42-18 54-40z" fill="#f5a02a"/><path d="M1364 1250c-10 16-18 36-22 48 14-6 28-14 36-26z" fill="#ffd766"/><path d="M1496 1117c-60 2-106 32-138 120l34 34c76-34 106-94 104-154z" fill="url(#rk)"/><path d="M1496 1117c-14 0-26 2-36 6 10 10 22 18 34 22 2-10 2-18 2-28z" fill="#2f4bb8"/><ellipse cx="1437" cy="1156" rx="22" ry="24" fill="#1e4eae"/><ellipse cx="1436" cy="1155" rx="15" ry="17" fill="#5cc3fa"/><path d="M1362 1232l34 38-10 6-32-34z" fill="#3552b5"/><path d="M1414 1202c-18 16-28 32-32 54 20-8 32-26 38-48z" fill="#4c6be0"/></svg> הלידים בדרך אליך</span>
        <span class="line line--emoji"><svg class="emoji" viewBox="1326 1353 179 193" preserveAspectRatio="none" role="img" aria-label="פיצוץ"><defs><radialGradient id="bm"><stop offset="0" stop-color="#fffbe2"/><stop offset=".4" stop-color="#fff3b4"/><stop offset=".7" stop-color="#fdc65e"/><stop offset="1" stop-color="#f5821f"/></radialGradient></defs><path d="M1418 1358l14 48 42-38-16 54 36-6-28 32 28 30-40-6 32 62-50-36-14 40-20-42-52 34 22-52-32-4 30-28-36-34 44 6-28-56 50 40z" fill="url(#bm)" stroke="#c9370e" stroke-width="4" stroke-linejoin="round"/></svg> זה קורה — עכשיו!</span>
        <span class="line line--blank"></span>
        <span class="line line--emoji"><svg class="emoji" viewBox="1326 58 179 193" preserveAspectRatio="none" role="img" aria-label="נעץ"><path d="M1386 178l-50 64 6-2 56-52z" fill="#c5ccd4" stroke="#8b949e" stroke-width="2"/><defs><linearGradient id="pn"><stop offset="0" stop-color="#ff5a70"/><stop offset=".5" stop-color="#e0173c"/><stop offset="1" stop-color="#a30a2a"/></linearGradient></defs><path d="M1372 146c8-12 26-10 36-4l36-44c-4-24 0-42 16-42 20 4 42 36 38 54-8 14-22 10-32 6l-22 48c8 18 0 40-16 40-26 0-56-30-56-58z" fill="url(#pn)"/><path d="M1448 88c4 16 16 28 28 30M1384 150c6 24 24 36 44 36" stroke="#a90d2c" stroke-width="4" fill="none"/><path d="M1412 142l34-42" stroke="#ff8795" stroke-width="6"/></svg> קבוצה: קבלן בניין ,</span>
        <span class="line">שיפוצים ,שלד וגמרים מג1</span>
        <span class="line">עד ג5 ענף הבניה בישראל</span>
        <span class="line line--emoji"><svg class="emoji" viewBox="1326 675 179 193" preserveAspectRatio="none" role="img" aria-label="כרטסת"><rect x="1433" y="676" width="50" height="30" rx="4" fill="#b04ddb"/><rect x="1341" y="692" width="149" height="30" rx="3" fill="#c4c7c8"/><rect x="1387" y="698" width="50" height="26" rx="4" fill="#f39a20"/><rect x="1339" y="712" width="152" height="25" rx="3" fill="#d6d9da"/><rect x="1340" y="717" width="52" height="30" rx="4" fill="#86cc2b"/><path d="M1336 738q0-4 4-4h149q4 0 4 4v125h-157z" fill="#eff2f3"/><path d="M1338 762h154M1338 774h154M1338 787h154M1338 799h154M1338 812h154M1338 825h154M1338 838h154M1338 850h154" stroke="#cfd5d8" stroke-width="2"/></svg> קטגוריה: מאור חדד</span>
        <span class="line">קבלן בניין ושיפוצים</span>
        <span class="line line--emoji"><svg class="emoji" viewBox="1326 1105 179 193" preserveAspectRatio="none" role="img" aria-label="צללית"><defs><linearGradient id="bu" x2="0" y2="1"><stop offset="0" stop-color="#8399c6"/><stop offset="1" stop-color="#3f5184"/></linearGradient></defs><path d="M1415 1105c-40 0-54 30-48 66 0 30 16 50 24 62 4 24-38 22-40 64h128c-2-42-44-40-40-64 8-12 24-32 24-62 6-36-8-66-48-66z" fill="url(#bu)"/></svg> מפרסם: לא ידוע</span>
        <span class="line line--emoji"><svg class="emoji" viewBox="1326 1343 179 193" preserveAspectRatio="none" role="img" aria-label="פתק ועיפרון"><path d="M1332 1343h134v192h-134z" fill="#f3cfe9"/><rect x="1342" y="1354" width="112" height="170" rx="8" fill="none" stroke="#c99fc6" stroke-width="2"/><path d="M1356 1370h84" stroke="#8e6d94" stroke-width="5" stroke-dasharray="5 2"/><path d="M1356 1387h86M1356 1399h86M1356 1411h86M1356 1423h86M1356 1435h60M1356 1447h50M1356 1459h40M1356 1471h84M1356 1483h84M1356 1495h84M1378 1423v40M1396 1423v30" stroke="#b98dbd" stroke-width="2"/><path d="M1456 1372l26 32-66 76-34 10 4-34z" fill="#f5a31c"/><path d="M1464 1382l9 10-70 82-8-10z" fill="#ffc341"/><path d="M1386 1456c12-2 28 10 30 24l-34 10z" fill="#f6dcb6"/><path d="M1384 1478l8 10-10 3z" fill="#2b2b2b"/><path d="M1456 1372l10-12 26 32-10 12z" fill="#bcc5cb"/><path d="M1466 1360c12-10 38 8 30 26l-6 7z" fill="#ee8488"/></svg> מחפש קבלן לבניית</span>
        <span class="line">34 יח"ד+ 3 קומות מרתף</span>
        <span class="line">במרכז הארץ</span>
        <span class="line">לפרטים נוספים בפרטי</span>
        <span class="line">אליהו <a href="tel:0586622487">058-6622487</a></span>
      </p>
      <p class="text text--ltr" dir="ltr"><span class="line line--emoji line--url"><svg class="emoji" viewBox="83 859 179 207" preserveAspectRatio="none" role="img" aria-label="קישור"><g fill="none" stroke="#8f8f8c" stroke-width="14"><ellipse cx="203" cy="928" rx="33" ry="62" transform="rotate(24 203 928)"/><ellipse cx="141" cy="997" rx="38" ry="62" transform="rotate(24 141 997)"/></g><g fill="none" stroke="#e4e4e2" stroke-width="8"><ellipse cx="203" cy="928" rx="34" ry="63" transform="rotate(24 203 928)"/><ellipse cx="141" cy="997" rx="39" ry="63" transform="rotate(24 141 997)"/></g><path d="M160 946q18 6 24 28" fill="none" stroke="#f3f3f1" stroke-width="10"/></svg> <a href="https://tinyurl.com/26bvov84">https://tinyurl.com</a></span><span class="line"><a href="https://tinyurl.com/26bvov84">/26bvov84</a></span></p>
      <div class="meta"><svg width="48" height="30" viewBox="0 0 48 30" fill="none" stroke="#9dbcae" stroke-width="4" stroke-linecap="round" stroke-linejoin="round"><path d="M2 18l9 10L31 2M24 25l3 3L46 2"/></svg><time>14:39</time></div>
    </div>
    <button class="forward" aria-label="העברה"><svg width="60" height="42" viewBox="0 0 60 42" fill="none" stroke="#fff" stroke-width="6" stroke-linecap="round" stroke-linejoin="round"><path d="M4 37v-6q0-14 14-14h24M27 3l15 14-15 14M42 3l15 14-15 14"/></svg></button>
  </article>

  <form class="composer">
    <button type="button" class="mic" aria-label="הקלטה"><svg width="42" height="58" viewBox="0 0 42 58"><rect x="12" width="18" height="37" rx="9" fill="#0b1014"/><path d="M3 30c1 22 35 22 36 0M21 46v9" fill="none" stroke="#0b1014" stroke-width="6" stroke-linecap="round"/></svg></button>
    <div class="field">
      <button type="button" class="icon-btn" aria-label="מצלמה"><svg width="60" height="56" viewBox="0 0 60 56" fill="none" stroke="#8c9599" stroke-width="6" stroke-linejoin="round"><path d="M3 9h14l6-6h14l6 6h14v43H3z"/><circle cx="30" cy="31" r="11"/></svg></button>
      <button type="button" class="icon-btn icon-btn--attach" aria-label="צירוף"><svg width="38" height="60" viewBox="0 0 38 60" fill="none" stroke="#8c9599" stroke-width="6" stroke-linecap="round"><path d="M35 15v26c0 21-32 21-32 0V15c0-16 24-16 24 0v25c0 10-13 10-13 0V15"/></svg></button>
      <input class="field__input" type="text" dir="rtl" placeholder="הודעה" aria-label="הודעה">
      <button type="button" class="icon-btn" aria-label="מדבקות"><svg width="60" height="60" viewBox="0 0 60 60"><path d="M19 3h22q16 0 16 16v16q0 3-3 6L41 54q-3 3-7 3H19Q3 57 3 41V19Q3 3 19 3z" fill="none" stroke="#8c9599" stroke-width="6"/><path d="M33 56V44q0-10 10-10h13" fill="none" stroke="#8c9599" stroke-width="6"/><circle cx="19" cy="20" r="5" fill="#8c9599"/><circle cx="41" cy="20" r="5" fill="#8c9599"/><path d="M16 34h21q-4 3-5 10-13 0-16-10z" fill="#8c9599"/></svg></button>
    </div>
  </form>
</main>

<nav class="navbar">
  <button class="icon-btn" aria-label="אחרונים"><svg width="42" height="48" viewBox="0 0 42 48" stroke="#b8b8b8" stroke-width="4" stroke-linecap="round"><path d="M2 3v42M21 3v42M40 3v42"/></svg></button>
  <button class="icon-btn icon-btn--home" aria-label="בית"><svg width="48" height="48" viewBox="0 0 48 48"><rect x="2" y="2" width="44" height="44" rx="15" fill="none" stroke="#b8b8b8" stroke-width="4"/></svg></button>
  <button class="icon-btn" aria-label="הקודם"><svg width="30" height="48" viewBox="0 0 30 48" fill="none" stroke="#b8b8b8" stroke-width="4" stroke-linecap="round" stroke-linejoin="round"><path d="M2 2l26 22L2 46"/></svg></button>
</nav>
</div>
</body>
</html>
```
FILE: styles.css
```css
* {
  box-sizing: border-box;
}

body {
  margin: 0;
  background: #0c1014;
  color: #f5f7fa;
  font-family: Roboto, "Open Sans", "Liberation Sans", sans-serif;
}

button {
  display: flex;
  align-items: center;
  justify-content: center;
  padding: 0;
  border: 0;
  background: none;
}

svg {
  flex: none;
}

.screen {
  display: flex;
  flex-direction: column;
  height: 100vh;
}

/* Status bar */
.statusbar {
  display: flex;
  justify-content: space-between;
  align-items: center;
  height: 100px;
  padding: 0 57px 0 63px;
}

.statusbar__group {
  display: flex;
  align-items: center;
  gap: 12px;
}

.statusbar__dot {
  margin-right: 7px;
}

.statusbar__time {
  padding-left: 6px;
  font: 700 40px/48px Inter, sans-serif;
}

.battery {
  display: flex;
  align-items: center;
  justify-content: center;
  gap: 5px;
  width: 79px;
  height: 42px;
  padding-left: 4px;
  border-radius: 21px;
  background: linear-gradient(90deg, #96999c 13px, #f0f0f0 13px);
  color: #0c1014;
  font: 700 33px/42px Roboto, sans-serif;
}

/* Conversation header */
.appbar {
  display: flex;
  align-items: center;
  height: 151px;
  padding: 0 46px 13px 59px;
  border-bottom: 2px solid #15191c;
}

.icon-btn--call {
  margin-left: 93px;
}

.icon-btn--video {
  margin-left: 86px;
}

.appbar__title {
  flex: 1;
  margin: 0 36px 0 0;
  font-size: 56px;
  font-weight: 700;
  line-height: 72px;
  white-space: nowrap;
}

.devil {
  margin: -10px 0;
  vertical-align: 0;
}

.avatar {
  display: flex;
  flex: none;
  align-items: center;
  justify-content: center;
  width: 108px;
  height: 108px;
  margin: 2px 61px 0 0;
  border-radius: 50%;
  background: #fff;
  font-family: "Open Sans", sans-serif;
}

.avatar__text {
  display: flex;
  flex-direction: column;
  color: #333;
  font-size: 15px;
  line-height: 14px;
}

.avatar__text small {
  color: #9a9a9a;
  font-size: 6px;
  line-height: 6px;
}

/* Message area */
.chat {
  position: relative;
  display: flex;
  flex: 1;
  flex-direction: column;
  justify-content: flex-end;
  min-height: 0;
  overflow: hidden;
}

.doodles {
  position: absolute;
  inset: 0;
  width: 100%;
  height: 100%;
  fill: none;
  stroke: #24292d;
  stroke-width: 2;
  stroke-linecap: round;
  stroke-linejoin: round;
}

.doodles * {
  vector-effect: non-scaling-stroke;
}

.doodles .fill {
  fill: #24292d;
}

.message {
  position: relative;
  display: flex;
  align-items: flex-start;
  gap: 25px;
  padding-left: 51px;
}

.bubble {
  width: 100%;
  max-width: 702px;
  padding: 20px 30px 11px 27px;
  border-radius: 36px;
  background: #144d37;
}

.text {
  margin: 0;
  color: #f4fbf7;
  font-size: 55px;
  font-weight: 700;
  line-height: 73px;
  white-space: nowrap;
}

.text--ltr {
  padding-left: 9px;
}

.line {
  display: block;
}

.line--emoji {
  padding: 7px 0 11px;
}

.line--blank {
  height: 63px;
}

.line--url {
  padding-bottom: 1px;
}

.emoji {
  width: 80px;
  height: 74px;
  margin: -10px 0;
  vertical-align: -8px;
}

.text a {
  color: #53bdeb;
  font-size: 53px;
  font-weight: 600;
  text-decoration-thickness: 3px;
  text-decoration-skip-ink: none;
  text-underline-offset: 4px;
}

.meta {
  display: flex;
  align-items: center;
  gap: 13px;
  padding-top: 18px;
  color: #9dbcae;
  font-size: 40px;
  line-height: 48px;
}

.forward {
  flex: none;
  width: 97px;
  height: 97px;
  margin-top: 239px;
  border-radius: 50%;
  background: #0f181e;
}

/* Composer */
.composer {
  position: relative;
  display: flex;
  align-items: center;
  gap: 14px;
  padding: 25px 15px 12px 13px;
}

.mic {
  flex: none;
  width: 144px;
  height: 144px;
  border-radius: 50%;
  background: #24c265;
}

.field {
  display: flex;
  flex: 1;
  align-items: center;
  min-width: 0;
  height: 141px;
  padding: 0 39px 0 40px;
  border-radius: 71px;
  background: #1f272a;
}

.icon-btn--attach {
  margin-left: 94px;
}

.field__input {
  flex: 1;
  min-width: 0;
  margin: 0 41px;
  padding: 0;
  border: 0;
  outline: 0;
  background: none;
  color: #f5f7fa;
  font: 400 59px/80px Roboto, "Open Sans", sans-serif;
}

.field__input::placeholder {
  color: #8c9599;
  opacity: 1;
}

/* System navigation */
.navbar {
  display: flex;
  align-items: center;
  justify-content: space-between;
  height: 145px;
  padding: 0 219px;
  background: #000;
}

.icon-btn--home {
  margin-right: 6px;
}
```
